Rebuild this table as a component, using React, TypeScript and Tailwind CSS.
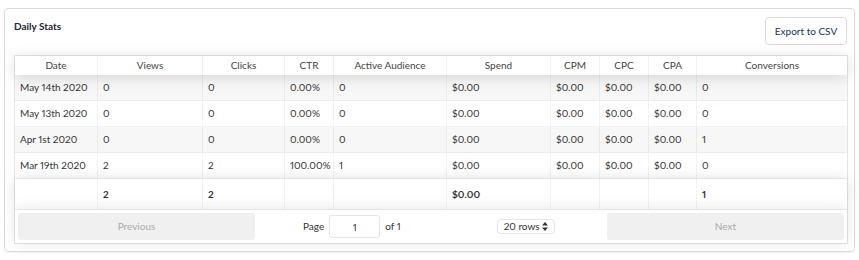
import clsx from "clsx";

type Col = { key: string; title: string; width: string };

const COLUMNS: Col[] = [
  { key: "date", title: "Date", width: "w-[83px]" },
  { key: "views", title: "Views", width: "w-[105px]" },
  { key: "clicks", title: "Clicks", width: "w-[82px]" },
  { key: "ctr", title: "CTR", width: "w-[49px]" },
  { key: "audience", title: "Active Audience", width: "w-[113px]" },
  { key: "spend", title: "Spend", width: "w-[104px]" },
  { key: "cpm", title: "CPM", width: "w-[49px]" },
  { key: "cpc", title: "CPC", width: "w-[49px]" },
  { key: "cpa", title: "CPA", width: "w-[48px]" },
  { key: "conversions", title: "Conversions", width: "flex-1" },
];

const ROWS: Record<string, string>[] = [
  { date: "May 14th 2020", views: "0", clicks: "0", ctr: "0.00%", audience: "0", spend: "$0.00", cpm: "$0.00", cpc: "$0.00", cpa: "$0.00", conversions: "0" },
  { date: "May 13th 2020", views: "0", clicks: "0", ctr: "0.00%", audience: "0", spend: "$0.00", cpm: "$0.00", cpc: "$0.00", cpa: "$0.00", conversions: "0" },
  { date: "Apr 1st 2020", views: "0", clicks: "0", ctr: "0.00%", audience: "0", spend: "$0.00", cpm: "$0.00", cpc: "$0.00", cpa: "$0.00", conversions: "1" },
  { date: "Mar 19th 2020", views: "2", clicks: "2", ctr: "100.00%", audience: "1", spend: "$0.00", cpm: "$0.00", cpc: "$0.00", cpa: "$0.00", conversions: "0" },
];

const TOTALS: Record<string, string> = { views: "2", clicks: "2", spend: "$0.00", conversions: "1" };

const cellBorder = "border-r border-black/[0.05] last:border-r-0";

const App = (): JSX.Element => (
  <div className="w-[859px] h-[260px] bg-white font-['Lato','Liberation_Sans',sans-serif] proportional-nums text-[#333]">
    <div className="ml-[4px] pt-[8px] w-[851px]">
      <div className="border border-[#dddbda] rounded-[4px] pt-[8px] pl-[9px] pr-[6px] pb-[7px] shadow-[0_1px_2px_rgba(0,0,0,0.06)]">
        <div className="flex justify-between items-start h-[28px]">
          <h2 className="text-[10px] font-bold text-[#1d2433] mt-[2px] leading-[14px]">Daily Stats</h2>
          <button className="h-[28px] w-[82px] mr-[1px] border border-[#dddbda] rounded-[4px] text-[10px] text-[#16325c] bg-white">
            Export to CSV
          </button>
        </div>

        <div className="mt-[10px] w-[834px] border border-black/[0.1] text-[10px]">
          {/* header */}
          <div className="flex h-[19px] items-center shadow-[0_2px_15px_0_rgba(0,0,0,0.15)] relative">
            {COLUMNS.map((c) => (
              <div key={c.key} className={clsx(c.width, cellBorder, "h-full flex items-center justify-center text-[#444]")}>
                {c.title}
              </div>
            ))}
          </div>

          {/* body */}
          {ROWS.map((r, i) => (
            <div
              key={r.date}
              className={clsx("flex h-[26px] border-b border-black/[0.05] last:border-b-0", i % 2 === 0 ? "bg-[#f7f7f7]" : "bg-white")}
            >
              {COLUMNS.map((c) => (
                <div key={c.key} className={clsx(c.width, cellBorder, "h-full flex items-center px-[5px] whitespace-nowrap")}>
                  {r[c.key]}
                </div>
              ))}
            </div>
          ))}

          {/* footer */}
          <div className="flex h-[30px] relative bg-white shadow-[0_0_15px_0_rgba(0,0,0,0.12)]">
            {COLUMNS.map((c) => (
              <div key={c.key} className={clsx(c.width, cellBorder, "h-full flex items-center px-[5px] font-bold")}>
                {TOTALS[c.key] ?? ""}
              </div>
            ))}
          </div>

          {/* pagination */}
          <div className="flex items-stretch p-[3px] h-[34px] border-t border-black/[0.1] bg-white shadow-[0_0_15px_0_rgba(0,0,0,0.1)] relative">
            <button className="w-[237px] rounded-[3px] bg-black/[0.06] text-[#aaa] text-[10px]">Previous</button>
            <div className="flex-1 flex items-center text-[10px] text-[#333]">
              <div className="flex items-center ml-[48px]">
                <span>Page</span>
                <input
                  readOnly
                  value="1"
                  className="mx-[5px] w-[51px] h-[23px] border border-black/[0.1] rounded-[3px] text-center text-[10px] outline-none"
                />
                <span>of 1</span>
              </div>
              <div className="ml-[96px] flex items-center h-[15px] w-[58px] border border-black/[0.1] rounded-[4px] px-[6px] justify-between">
                <span>20 rows</span>
                <svg width="6" height="9" viewBox="0 0 6 9">
                  <path d="M3 0L6 3.5H0Z" fill="#333" />
                  <path d="M3 9L0 5.5H6Z" fill="#333" />
                </svg>
              </div>
            </div>
            <button className="w-[237px] rounded-[3px] bg-black/[0.06] text-[#aaa] text-[10px]">Next</button>
          </div>
        </div>
      </div>
    </div>
  </div>
);

export default App;
